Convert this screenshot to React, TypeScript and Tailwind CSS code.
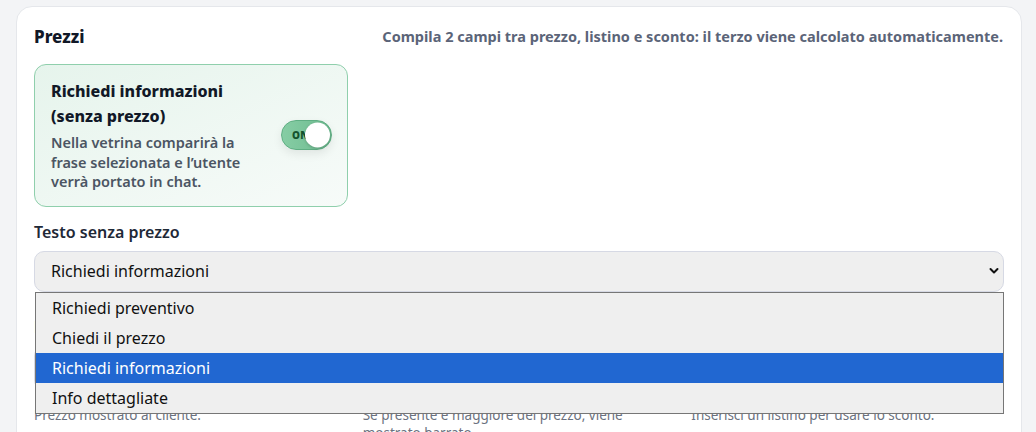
import { useState } from "react";

const options = [
  "Richiedi preventivo",
  "Chiedi il prezzo",
  "Richiedi informazioni",
  "Info dettagliate",
];

const fields = [
  { label: "Prezzo", help: "Prezzo mostrato al cliente." },
  { label: "Prezzo di listino", help: "Se presente e maggiore del prezzo, viene mostrato barrato." },
  { label: "Sconto %", help: "Inserisci un listino per usare lo sconto." },
];

export default function App() {
  const [enabled, setEnabled] = useState(true);
  const [selected, setSelected] = useState("Richiedi informazioni");

  return (
    <div
      className="min-h-screen bg-[#f3f4f6] pl-4 pr-[14px] pt-[6px]"
      style={{ fontFamily: '"Noto Sans", "Open Sans", sans-serif' }}
    >
      <section className="rounded-2xl border border-[#e5e7eb] bg-white px-[17px] pt-[18px] pb-6">
        {/* Header */}
        <div className="flex items-center justify-between pr-[1px]">
          <h2 className="text-[17px] font-extrabold leading-6 text-[#111827]">Prezzi</h2>
          <p className="text-[14.5px] font-bold text-[#5b6478]">
            Compila 2 campi tra prezzo, listino e sconto: il terzo viene calcolato automaticamente.
          </p>
        </div>

        {/* Richiedi informazioni toggle card */}
        <div className="mt-[15px] flex w-[314px] items-center gap-4 rounded-xl border border-[#8fcfac] bg-gradient-to-br from-[#e6f4ec] to-[#f7fbf9] py-[14px] pl-4 pr-[15px]">
          <div className="flex-1">
            <h3 className="text-[16px] font-extrabold leading-[25px] text-[#111827]">
              Richiedi informazioni (senza prezzo)
            </h3>
            <p className="mt-1 text-[14.5px] font-semibold leading-[19.5px] text-[#4b5563]">
              Nella vetrina comparirà la frase selezionata e l’utente verrà portato in chat.
            </p>
          </div>
          <button
            onClick={() => setEnabled(!enabled)}
            className="relative h-[30px] w-[51px] shrink-0 rounded-full border border-[#5fae83] bg-gradient-to-r from-[#86cda4] to-[#6dbb90] shadow-[0_4px_10px_rgba(0,0,0,0.08)]"
          >
            <span className="absolute left-[10px] top-1/2 -translate-y-1/2 text-[10px] font-black tracking-wide text-[#14532d]">
              ON
            </span>
            <span className="absolute right-[1px] top-1/2 h-[25px] w-[25px] -translate-y-1/2 rounded-full bg-white shadow-[0_1px_3px_rgba(0,0,0,0.2)]" />
          </button>
        </div>

        {/* Testo senza prezzo */}
        <label className="mt-[14px] block text-[16px] font-semibold leading-[22px] text-[#1f2937]">
          Testo senza prezzo
        </label>
        <div className="relative mt-2">
          <div className="flex h-[41px] items-center justify-between rounded-[10px] border border-[#d6d9e4] bg-[#efefef] pl-4 pr-[4px]">
            <span className="text-[16px] text-[#111111]">{selected}</span>
            <svg width="10" height="8" viewBox="0 0 10 8" fill="none">
              <path d="M1.5 2L5 5.5L8.5 2" stroke="#111" strokeWidth="2" strokeLinecap="round" strokeLinejoin="round" />
            </svg>
          </div>

          {/* Open native list */}
          <ul className="absolute left-[1px] right-0 top-full z-10 border border-[#767676] bg-[#efefef]">
            {options.map((opt) => (
              <li
                key={opt}
                onClick={() => setSelected(opt)}
                className={
                  opt === selected
                    ? "flex h-[30px] items-center bg-[#2167d1] pl-4 text-[16px] text-white"
                    : "flex h-[30px] items-center pl-4 text-[16px] text-[#111111]"
                }
              >
                {opt}
              </li>
            ))}
          </ul>
        </div>

        {/* Price fields */}
        <div className="mt-6 grid grid-cols-3 gap-4">
          {fields.map((f) => (
            <div key={f.label}>
              <label className="block text-[16px] font-semibold leading-[22px] text-[#1f2937]">{f.label}</label>
              <input className="mt-2 h-11 w-full rounded-[10px] border border-[#d6d9e4] bg-white px-4" />
              <p className="mt-4 text-[13.5px] leading-[18px] text-[#6b7280]">{f.help}</p>
            </div>
          ))}
        </div>
      </section>
    </div>
  );
}
